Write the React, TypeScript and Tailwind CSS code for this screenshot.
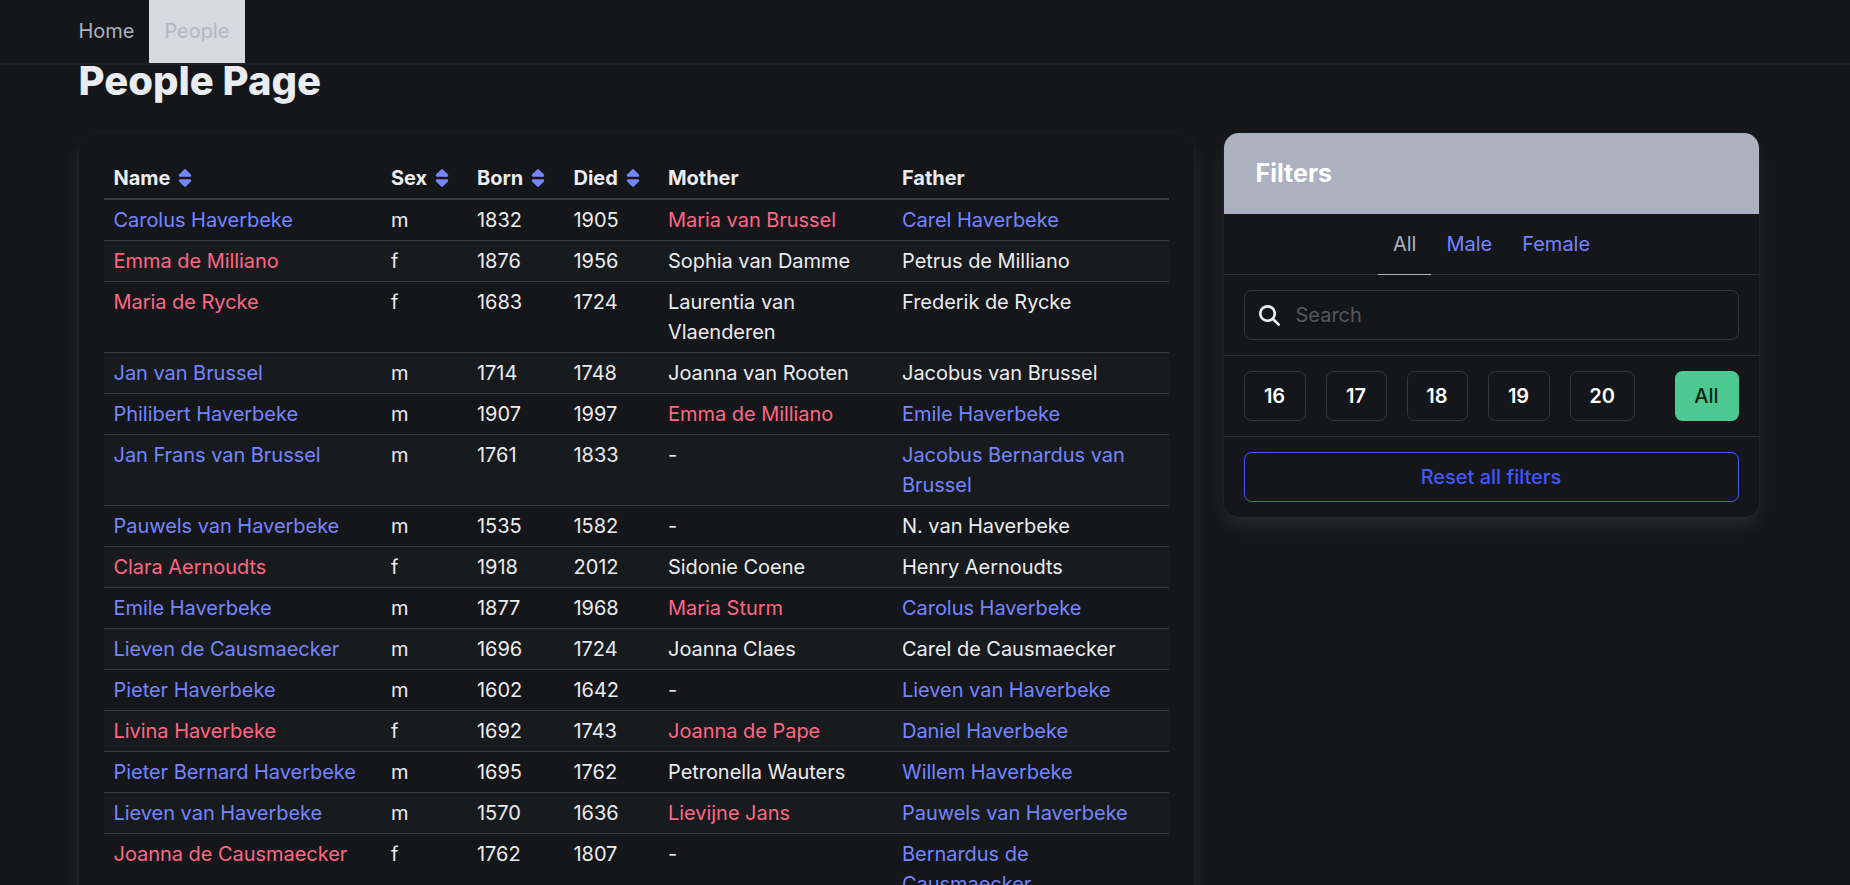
import { FaMagnifyingGlass, FaSort } from 'react-icons/fa6';

type Person = { name: string; sex: 'm' | 'f'; born: number; died: number; mother: string; father: string };

const p = (name: string, sex: 'm' | 'f', born: number, died: number, mother: string, father: string): Person => ({
  name,
  sex,
  born,
  died,
  mother,
  father,
});

/* A leading "@" marks a parent who has a page of their own. */
const people: Person[] = [
  p('Carolus Haverbeke', 'm', 1832, 1905, '@Maria van Brussel', '@Carel Haverbeke'),
  p('Emma de Milliano', 'f', 1876, 1956, 'Sophia van Damme', 'Petrus de Milliano'),
  p('Maria de Rycke', 'f', 1683, 1724, 'Laurentia van Vlaenderen', 'Frederik de Rycke'),
  p('Jan van Brussel', 'm', 1714, 1748, 'Joanna van Rooten', 'Jacobus van Brussel'),
  p('Philibert Haverbeke', 'm', 1907, 1997, '@Emma de Milliano', '@Emile Haverbeke'),
  p('Jan Frans van Brussel', 'm', 1761, 1833, '-', '@Jacobus Bernardus van Brussel'),
  p('Pauwels van Haverbeke', 'm', 1535, 1582, '-', 'N. van Haverbeke'),
  p('Clara Aernoudts', 'f', 1918, 2012, 'Sidonie Coene', 'Henry Aernoudts'),
  p('Emile Haverbeke', 'm', 1877, 1968, '@Maria Sturm', '@Carolus Haverbeke'),
  p('Lieven de Causmaecker', 'm', 1696, 1724, 'Joanna Claes', 'Carel de Causmaecker'),
  p('Pieter Haverbeke', 'm', 1602, 1642, '-', '@Lieven van Haverbeke'),
  p('Livina Haverbeke', 'f', 1692, 1743, '@Joanna de Pape', '@Daniel Haverbeke'),
  p('Pieter Bernard Haverbeke', 'm', 1695, 1762, 'Petronella Wauters', '@Willem Haverbeke'),
  p('Lieven van Haverbeke', 'm', 1570, 1636, '@Lievijne Jans', '@Pauwels van Haverbeke'),
  p('Joanna de Causmaecker', 'f', 1762, 1807, '-', '@Bernardus de Causmaecker'),
];

function PersonLink({ name, sex }: { name: string; sex: 'm' | 'f' }) {
  return (
    <a href="#" className={sex === 'f' ? 'text-[#ff6685]' : 'text-[#7585ff]'}>
      {name}
    </a>
  );
}

function Parent({ value, sex }: { value: string; sex: 'm' | 'f' }) {
  return value.startsWith('@') ? <PersonLink name={value.slice(1)} sex={sex} /> : <>{value}</>;
}

function Heading({ label, sortable }: { label: string; sortable?: boolean }) {
  return (
    <th className="border-b-2 border-[#393b40] px-2.5 py-[5px] text-left font-bold text-[#ebecf0]">
      <span className="flex items-center">
        {label}
        {sortable && (
          <a href="#" className="flex h-[30px] w-[30px] items-center justify-center text-[#7585ff]">
            <FaSort size={20} />
          </a>
        )}
      </span>
    </th>
  );
}

const cell = 'border-b border-[#393b40] px-2.5 py-[5px] align-top';

function PeopleTable() {
  return (
    <table className="w-full table-fixed border-separate border-spacing-0 tracking-[-0.04px]">
      <colgroup>
        <col className="w-[277.5px]" />
        <col className="w-[86px]" />
        <col className="w-[96.5px]" />
        <col className="w-[94.5px]" />
        <col className="w-[234px]" />
        <col />
      </colgroup>
      <thead>
        <tr>
          <Heading label="Name" sortable />
          <Heading label="Sex" sortable />
          <Heading label="Born" sortable />
          <Heading label="Died" sortable />
          <Heading label="Mother" />
          <Heading label="Father" />
        </tr>
      </thead>
      <tbody>
        {people.map((person) => (
          <tr key={person.name} className="even:bg-[#181b1e]">
            <td className={cell}>
              <PersonLink name={person.name} sex={person.sex} />
            </td>
            <td className={cell}>{person.sex}</td>
            <td className={cell}>{person.born}</td>
            <td className={cell}>{person.died}</td>
            <td className={cell}>
              <Parent value={person.mother} sex="f" />
            </td>
            <td className={cell}>
              <Parent value={person.father} sex="m" />
            </td>
          </tr>
        ))}
      </tbody>
    </table>
  );
}

const centuries = [
  { label: '16', width: 'w-[62px]' },
  { label: '17', width: 'w-[61px]' },
  { label: '18', width: 'w-[61px]' },
  { label: '19', width: 'w-[62px]' },
  { label: '20', width: 'w-[65px]' },
];

function Filters() {
  return (
    <nav className="w-[535px] shrink-0 rounded-[15px] bg-[#14161a] shadow-[0_10px_20px_-2.5px_rgba(235,236,240,0.1),0_0_0_1px_rgba(235,236,240,0.02)]">
      <p className="h-[81px] rounded-t-[15px] bg-[#abb1bf] px-[32px] pt-[25px] text-[25px] leading-[31px] font-bold text-white">
        Filters
      </p>
      <div className="flex h-[61px] justify-center border-b border-[#2f3135] pl-px">
        <a href="#" className="-mb-px h-[61px] border-b border-[#abb1bf] px-[15px] pt-[15px] text-[#abb1bf]">
          All
        </a>
        <a href="#" className="px-[15px] pt-[15px] text-[#7585ff]">
          Male
        </a>
        <a href="#" className="px-[15px] pt-[15px] text-[#7585ff]">
          Female
        </a>
      </div>
      <div className="border-b border-[#2f3135] px-5 py-[15px]">
        <label className="flex h-[50px] items-center rounded-[7.5px] border border-[#36383c] pl-[14px] text-[#ebecf0]">
          <FaMagnifyingGlass size={21} />
          <input
            type="search"
            placeholder="Search"
            className="ml-[16px] min-w-0 flex-1 bg-transparent outline-none placeholder:text-[#55585b]"
          />
        </label>
      </div>
      <div className="flex justify-between border-b border-[#2f3135] px-5 py-[15px]">
        <div className="flex gap-5">
          {centuries.map(({ label, width }) => (
            <a
              key={label}
              href="#"
              className={`flex h-[50px] items-center justify-center rounded-[7.5px] border border-[#36383c] font-semibold text-white ${width}`}
            >
              {label}
            </a>
          ))}
        </div>
        <a
          href="#"
          className="flex h-[50px] w-[64px] items-center justify-center rounded-[7.5px] bg-[#4cc990] font-medium text-[#0c2318]"
        >
          All
        </a>
      </div>
      <div className="px-5 py-[15px]">
        <a
          href="#"
          className="flex h-[50px] items-center justify-center rounded-[7.5px] border border-[#4258ff] font-medium text-[#4258ff]"
        >
          Reset all filters
        </a>
      </div>
    </nav>
  );
}

export default function App() {
  return (
    <div className="h-[885px] overflow-hidden bg-[#14161a] font-['Inter',sans-serif] text-[20px] leading-[30px] text-[#ebecf0]">
      <nav className="flex h-[63px] pl-[63.4px] shadow-[0_2px_0_0_#1f2125]">
        <a href="#" className="flex items-center px-[15px] pb-[2px] text-[#abb1bf]">
          Home
        </a>
        <a href="#" className="flex items-center bg-[#d6d9e0] px-[15px] pb-[2px] text-[#b2b7c2]">
          People
        </a>
      </nav>
      <main className="mx-auto w-[1693px] pr-[12px]">
        <h1 className="-mt-[5px] mb-[30px] text-[40px] leading-[45px] font-extrabold">People Page</h1>
        <div className="flex items-start gap-[30px]">
          <section className="w-[1115px] shrink-0 rounded-[15px] p-[25px] shadow-[0_10px_20px_-2.5px_rgba(235,236,240,0.1),0_0_0_1px_rgba(235,236,240,0.02)]">
            <PeopleTable />
          </section>
          <Filters />
        </div>
      </main>
    </div>
  );
}
